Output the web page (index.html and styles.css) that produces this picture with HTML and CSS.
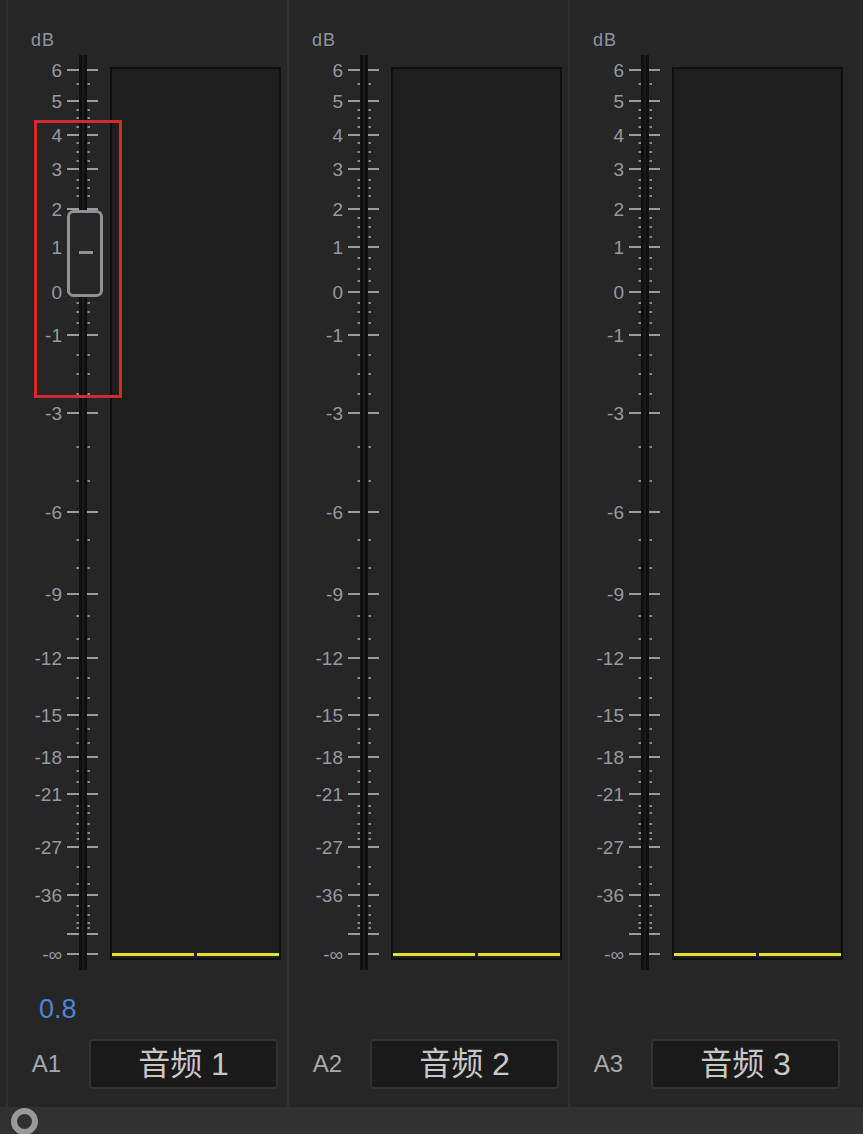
FILE: index.html
```html
<!DOCTYPE html>
<html lang="zh-CN">
<head>
  <meta charset="UTF-8">
  <title>音频混合器</title>
  <link rel="stylesheet" href="styles.css">
</head>
<body>
  <div class="mixer">
    <div class="strip">
      <div class="main">
        <svg class="scale" data-knob="1" width="100" height="975" viewBox="0 0 100 975"></svg>
        <div class="meter">
          <div class="chan"><span class="peak"></span></div>
          <div class="chan"><span class="peak"></span></div>
        </div>
        <div class="highlight"></div>
      </div>
      <div class="value">0.8</div>
      <div class="track-row">
        <span class="track-id">A1</span>
        <div class="track-name">音频 1</div>
      </div>
    </div>

    <div class="strip">
      <div class="main">
        <svg class="scale" width="100" height="975" viewBox="0 0 100 975"></svg>
        <div class="meter">
          <div class="chan"><span class="peak"></span></div>
          <div class="chan"><span class="peak"></span></div>
        </div>
      </div>
      <div class="value"></div>
      <div class="track-row">
        <span class="track-id">A2</span>
        <div class="track-name">音频 2</div>
      </div>
    </div>

    <div class="strip">
      <div class="main">
        <svg class="scale" width="100" height="975" viewBox="0 0 100 975"></svg>
        <div class="meter">
          <div class="chan"><span class="peak"></span></div>
          <div class="chan"><span class="peak"></span></div>
        </div>
      </div>
      <div class="value"></div>
      <div class="track-row">
        <span class="track-id">A3</span>
        <div class="track-name">音频 3</div>
      </div>
    </div>
  </div>

  <div class="statusbar">
    <svg class="status-icon" width="32" height="27" viewBox="0 0 32 27">
      <circle cx="15.5" cy="14.5" r="10.5" fill="none" stroke="#9a9a9a" stroke-width="6"/>
    </svg>
  </div>

  <script>
    // dB marks: [label, y]
    const majors = [
      ["6", 70], ["5", 101], ["4", 135], ["3", 169], ["2", 209], ["1", 247], ["0", 292],
      ["-1", 335], ["-3", 413], ["-6", 512], ["-9", 594], ["-12", 658], ["-15", 715],
      ["-18", 757], ["-21", 794], ["-27", 847], ["-36", 895], [null, 934], ["-∞", 954]
    ];
    const dots = [
      84, 110, 118, 127, 143, 152, 161, 180, 188, 196,
      218, 227, 237, 258, 269, 281, 303, 312, 323,
      355, 374, 394, 447, 481, 540, 568, 616, 639, 678, 698,
      729, 743, 771, 782, 806, 813, 824, 833, 839, 867, 884,
      906, 915, 923, 928
    ];
    const NS = "http://www.w3.org/2000/svg";

    function add(parent, tag, attrs) {
      const node = document.createElementNS(NS, tag);
      for (const k in attrs) node.setAttribute(k, attrs[k]);
      parent.appendChild(node);
      return node;
    }

    document.querySelectorAll(".scale").forEach(svg => {
      add(svg, "text", { x: 23, y: 46, class: "unit" }).textContent = "dB";
      add(svg, "rect", { x: 71, y: 55, width: 8, height: 915, class: "rail" });
      add(svg, "rect", { x: 74, y: 55, width: 2, height: 915, class: "rail-core" });

      dots.forEach(y => {
        add(svg, "rect", { x: 68.5, y: y - 1, width: 2.5, height: 2, class: "dot" });
        add(svg, "rect", { x: 79.5, y: y - 1, width: 2.5, height: 2, class: "dot" });
      });

      majors.forEach(([label, y]) => {
        add(svg, "line", { x1: 59, y1: y, x2: 71, y2: y, class: "tick" });
        add(svg, "line", { x1: 79, y1: y, x2: 90, y2: y, class: "tick" });
        if (label) add(svg, "text", { x: 54, y: y + 7, class: "label" }).textContent = label;
      });

      if (svg.dataset.knob) {
        add(svg, "rect", { x: 60.5, y: 211.5, width: 33, height: 84, rx: 5, class: "knob" });
        add(svg, "rect", { x: 71, y: 251, width: 14, height: 3, class: "knob-grip" });
      }
    });
  </script>
</body>
</html>
```

FILE: styles.css
```css
body {
  margin: 0;
  height: 1134px;
  overflow: hidden;
  background-color: #272627;
  font-family: "Liberation Sans", "Noto Sans CJK SC", sans-serif;
}

.mixer {
  display: flex;
  height: 1107px;
  padding-left: 6px;
}

.strip {
  width: 281px;
  box-sizing: border-box;
  border-left: 2px solid #323132;
  display: flex;
  flex-direction: column;
}

.main {
  position: relative;
  display: flex;
  align-items: flex-start;
  height: 975px;
}

.scale {
  display: block;
  flex: none;
}

.scale .unit {
  font-size: 18px;
  letter-spacing: 1px;
  fill: #8e949b;
}

.scale .label {
  font-size: 19px;
  fill: #939aa2;
  text-anchor: end;
}

.scale .rail {
  fill: #0f0f0f;
}

.scale .rail-core {
  fill: #1b1b1b;
}

.scale .tick {
  stroke: #9c9c9c;
  stroke-width: 2;
}

.scale .dot {
  fill: #8a8a8a;
}

.scale .knob {
  fill: #272627;
  stroke: #8e9094;
  stroke-width: 3;
}

.scale .knob-grip {
  fill: #8e9094;
}

.meter {
  display: flex;
  gap: 3px;
  width: 171px;
  height: 893px;
  margin-top: 67px;
  margin-left: 2px;
  box-sizing: border-box;
  border: 2px solid #0e0e0e;
  background-color: #1f1e1f;
}

.chan {
  flex: 1;
  display: flex;
  align-items: flex-end;
  padding-bottom: 2px;
}

.peak {
  width: 100%;
  height: 3px;
  background-color: #e0e032;
}

.highlight {
  position: absolute;
  left: 26px;
  top: 120px;
  width: 88px;
  height: 278px;
  box-sizing: border-box;
  border: 3px solid #d42a2e;
}

.value {
  height: 64px;
  box-sizing: border-box;
  padding: 21px 0 0 31px;
  font-size: 27px;
  line-height: 1;
  color: #4d84d6;
}

.track-row {
  display: flex;
  align-items: center;
  height: 50px;
}

.track-id {
  width: 77px;
  padding-right: 4px;
  text-align: center;
  font-size: 24px;
  color: #a5a8ac;
}

.track-name {
  width: 189px;
  height: 50px;
  box-sizing: border-box;
  border: 2px solid #343334;
  border-radius: 4px;
  background-color: #1b1a1b;
  color: #c8c8c8;
  font-size: 32px;
  line-height: 46px;
  text-align: center;
}

.statusbar {
  height: 27px;
  background-color: #323132;
  padding-left: 9px;
  overflow: hidden;
}

.status-icon {
  display: block;
}
```
